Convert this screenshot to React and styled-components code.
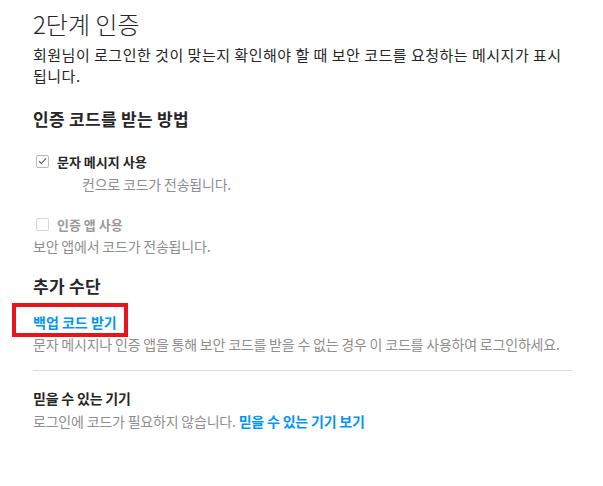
import React from "react";
import styled, { createGlobalStyle } from "styled-components";

const Global = createGlobalStyle`
  html, body { margin: 0; padding: 0; background: #fff; }
  body { font-family: "Noto Sans CJK KR", "Noto Sans", sans-serif; color: #262626; }
`;

const Page = styled.div`
  width: 539px;
  padding: 11px 0 40px 33px;
`;

const Title = styled.h1`
  margin: 0;
  font-size: 24px;
  line-height: 26px;
  font-weight: 300;
  color: #262626;
`;

const Lead = styled.p`
  margin: 7px 0 0;
  font-size: 15px;
  line-height: 21px;
  letter-spacing: 0.5px;
  color: #262626;
`;

const Heading = styled.h2`
  margin: ${(p) => p.$mt}px 0 0;
  font-size: ${(p) => (p.$small ? 14 : 17)}px;
  line-height: ${(p) => (p.$small ? 18 : 22)}px;
  letter-spacing: ${(p) => (p.$small ? -0.2 : 0.3)}px;
  font-weight: 700;
  color: #262626;
`;

const OptionRow = styled.label`
  margin-top: ${(p) => p.$mt}px;
  display: flex;
  align-items: center;
  gap: 8px;
  height: 20px;
  padding-left: 3px;
  font-size: 13px;
  font-weight: 700;
  color: ${(p) => (p.$disabled ? "#9a9a9a" : "#262626")};
`;

const Box = styled.span`
  width: 13px;
  height: 13px;
  box-sizing: border-box;
  border: 1px solid ${(p) => (p.$checked ? "#b8b8b8" : "#d6d6d6")};
  border-radius: 2px;
  display: flex;
  align-items: center;
  justify-content: center;
  background: #fff;
`;

const Note = styled.p`
  margin: ${(p) => p.$mt}px 0 0;
  padding-left: ${(p) => p.$indent || 0}px;
  font-size: 14px;
  line-height: 18px;
  letter-spacing: -0.2px;
  color: #8e8e8e;
`;

const LinkRow = styled.div`
  margin-top: 14px;
  line-height: 20px;
`;

const Link = styled.a`
  position: relative;
  display: inline-block;
  font-size: 14px;
  line-height: 20px;
  font-weight: 700;
  color: #0095f6;
  text-decoration: none;
  cursor: pointer;
  &::after {
    content: "";
    position: absolute;
    left: -21px;
    right: -11px;
    top: -9px;
    bottom: -5px;
    border: 4px solid #e8141c;
  }
`;

const InlineLink = styled.a`
  font-weight: 700;
  color: #0095f6;
  text-decoration: none;
`;

const Divider = styled.hr`
  margin: 17px 0 0;
  border: 0;
  height: 1px;
  background: #dbdbdb;
`;

const Check = () => (
  <svg width="9" height="8" viewBox="0 0 9 8" fill="none">
    <path d="M1 4.2 L3.4 6.5 L8 1.3" stroke="#555" strokeWidth="1.1" />
  </svg>
);

export default function App() {
  return (
    <>
      <Global />
      <Page>
        <Title>2단계 인증</Title>
        <Lead>
          회원님이 로그인한 것이 맞는지 확인해야 할 때 보안 코드를 요청하는 메시지가 표시됩니다.
        </Lead>

        <Heading $mt={22}>인증 코드를 받는 방법</Heading>

        <OptionRow $mt={21}>
          <Box $checked>
            <Check />
          </Box>
          문자 메시지 사용
        </OptionRow>
        <Note $mt={4} $indent={49}>컨으로 코드가 전송됩니다.</Note>

        <OptionRow $mt={21} $disabled>
          <Box />
          인증 앱 사용
        </OptionRow>
        <Note $mt={3}>보안 앱에서 코드가 전송됩니다.</Note>

        <Heading $mt={20}>추가 수단</Heading>
        <LinkRow>
          <Link>백업 코드 받기</Link>
        </LinkRow>
        <Note $mt={3}>
          문자 메시지나 인증 앱을 통해 보안 코드를 받을 수 없는 경우 이 코드를 사용하여 로그인하세요.
        </Note>

        <Divider />

        <Heading $mt={18} $small>믿을 수 있는 기기</Heading>
        <Note $mt={5}>
          로그인에 코드가 필요하지 않습니다. <InlineLink>믿을 수 있는 기기 보기</InlineLink>
        </Note>
      </Page>
    </>
  );
}
